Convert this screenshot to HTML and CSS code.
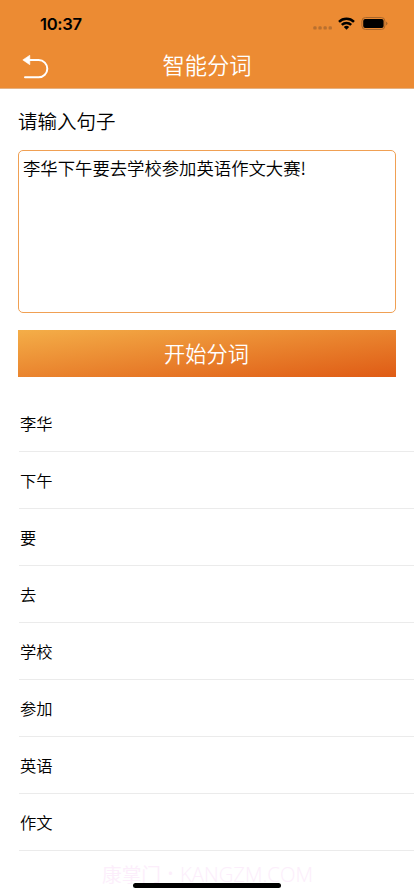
FILE: index.html
```html
<!DOCTYPE html>
<html lang="zh-CN">
<head>
<meta charset="utf-8">
<title>智能分词</title>
<link rel="stylesheet" href="styles.css">
</head>
<body>
<div class="screen">
  <header class="header">
    <div class="status">
      <span class="time">10:37</span>
      <svg class="signal" width="20" height="4" viewBox="0 0 20 4" fill="#b9702f"><rect x="0.3" y="0.3" width="3.3" height="3.3" rx="1.2"/><rect x="5.4" y="0.3" width="3.3" height="3.3" rx="1.2"/><rect x="10.5" y="0.3" width="3.3" height="3.3" rx="1.2"/><rect x="15.6" y="0.3" width="3.3" height="3.3" rx="1.2"/></svg>
      <svg class="wifi" width="17" height="13" viewBox="0 0 17 13" fill="none" stroke="#000" stroke-width="2.5"><path d="M1 4.8a10.8 10.8 0 0 1 15 0"/><path d="M3.8 7.9a6.8 6.8 0 0 1 9.4 0"/><path d="M8.5 12.7 5.8 10a3.9 3.9 0 0 1 5.4 0z" fill="#000" stroke="none"/></svg>
      <svg class="battery" width="27" height="13" viewBox="0 0 27 13"><rect x="0.9" y="0.5" width="23" height="12" rx="3.6" fill="none" stroke="#a8662b"/><rect x="2.2" y="1.9" width="20.4" height="9.2" rx="2"/><path d="M25 4.5q1.5.8 1.5 2t-1.5 2z" fill="#a8662b"/></svg>
    </div>
    <div class="navbar">
      <svg class="back" width="28" height="26" viewBox="0 0 28 26"><path d="M7 6.1h9.7a8.6 8.6 0 0 1 0 17.2H3" fill="none" stroke="#fff" stroke-width="2" stroke-linecap="round"/><path d="M0.8 5.9 7.8 1.3v9.4z" fill="#fff" stroke="#fff" stroke-width=".6" stroke-linejoin="round"/></svg>
      <h1 class="title">智能分词</h1>
    </div>
  </header>
  <main class="content">
    <label class="label" for="sentence">请输入句子</label>
    <textarea class="sentence" id="sentence" spellcheck="false">李华下午要去学校参加英语作文大赛!</textarea>
    <button class="submit">开始分词</button>
  </main>
  <ul class="words">
    <li>李华</li><li>下午</li><li>要</li><li>去</li><li>学校</li><li>参加</li><li>英语</li><li>作文</li>
  </ul>
  <div class="watermark"><span class="name">康掌门</span><span class="dot">•</span><span class="domain">KANGZM.COM</span></div>
  <div class="home"></div>
</div>
</body>
</html>
```
FILE: styles.css
```css
* { box-sizing: border-box; }
body {
  margin: 0;
  background: #fff;
  color: #000;
  font-family: "Noto Sans CJK SC", sans-serif;
}
.screen {
  position: relative;
  height: 896px;
  overflow: hidden;
}
.header {
  height: 89px;
  background: #ec8b33;
  border-bottom: 1px solid #e5b182;
}
.status {
  display: flex;
  align-items: center;
  height: 44px;
  padding: 3px 26px 0 40px;
}
.time {
  flex: 1;
  font: 600 16.6px/20px Inter, sans-serif;
  letter-spacing: -0.3px;
}
.signal { margin: 9px 5px 0 0; }
.wifi { margin-right: 6px; }
.navbar {
  display: grid;
  grid-template-columns: 92px 1fr 92px;
  align-items: center;
  height: 44px;
}
.back { margin: 2px 0 0 22px; }
.title {
  margin: -4px 0 0;
  color: #fff;
  font-size: 22.3px;
  font-weight: 350;
  line-height: 32px;
  text-align: center;
}
.content { padding: 17px 18px 0; }
.label {
  display: block;
  font-size: 19.5px;
  font-weight: 350;
  line-height: 30px;
}
.sentence {
  display: block;
  width: 100%;
  height: 163px;
  margin-top: 14px;
  padding: 4px;
  border: 1px solid #f0a053;
  border-radius: 5px;
  outline: none;
  resize: none;
  background: #fff;
  color: #000;
  font: 350 17.35px/26px "Noto Sans CJK SC", sans-serif;
}
.submit {
  display: block;
  width: 100%;
  height: 47px;
  margin-top: 17px;
  padding: 0 1px 2px 0;
  border: 0;
  background: linear-gradient(to bottom right, #f4ae48, #df5b15);
  color: #fff;
  font: 350 21.2px/45px "Noto Sans CJK SC", sans-serif;
}
.words {
  margin: 18px 0 0 19px;
  padding: 0;
  list-style: none;
}
.words li {
  height: 57.05px;
  padding-left: 1px;
  border-bottom: 1px solid #ebebeb;
  font-size: 16.3px;
  font-weight: 350;
  line-height: 56px;
}
.watermark {
  position: absolute;
  top: 859px;
  left: 102px;
  display: flex;
  color: #fceefb;
  font: 350 19.7px/30px "Noto Sans CJK SC", sans-serif;
  white-space: nowrap;
}
.watermark .dot {
  width: 19px;
  font-family: "Open Sans", sans-serif;
  text-align: center;
}
.watermark .domain {
  font-family: "Open Sans", sans-serif;
  font-size: 20.3px;
}
.home {
  position: absolute;
  bottom: 8px;
  left: 133px;
  width: 148px;
  height: 5px;
  border-radius: 3px;
  background: #000;
}
```
